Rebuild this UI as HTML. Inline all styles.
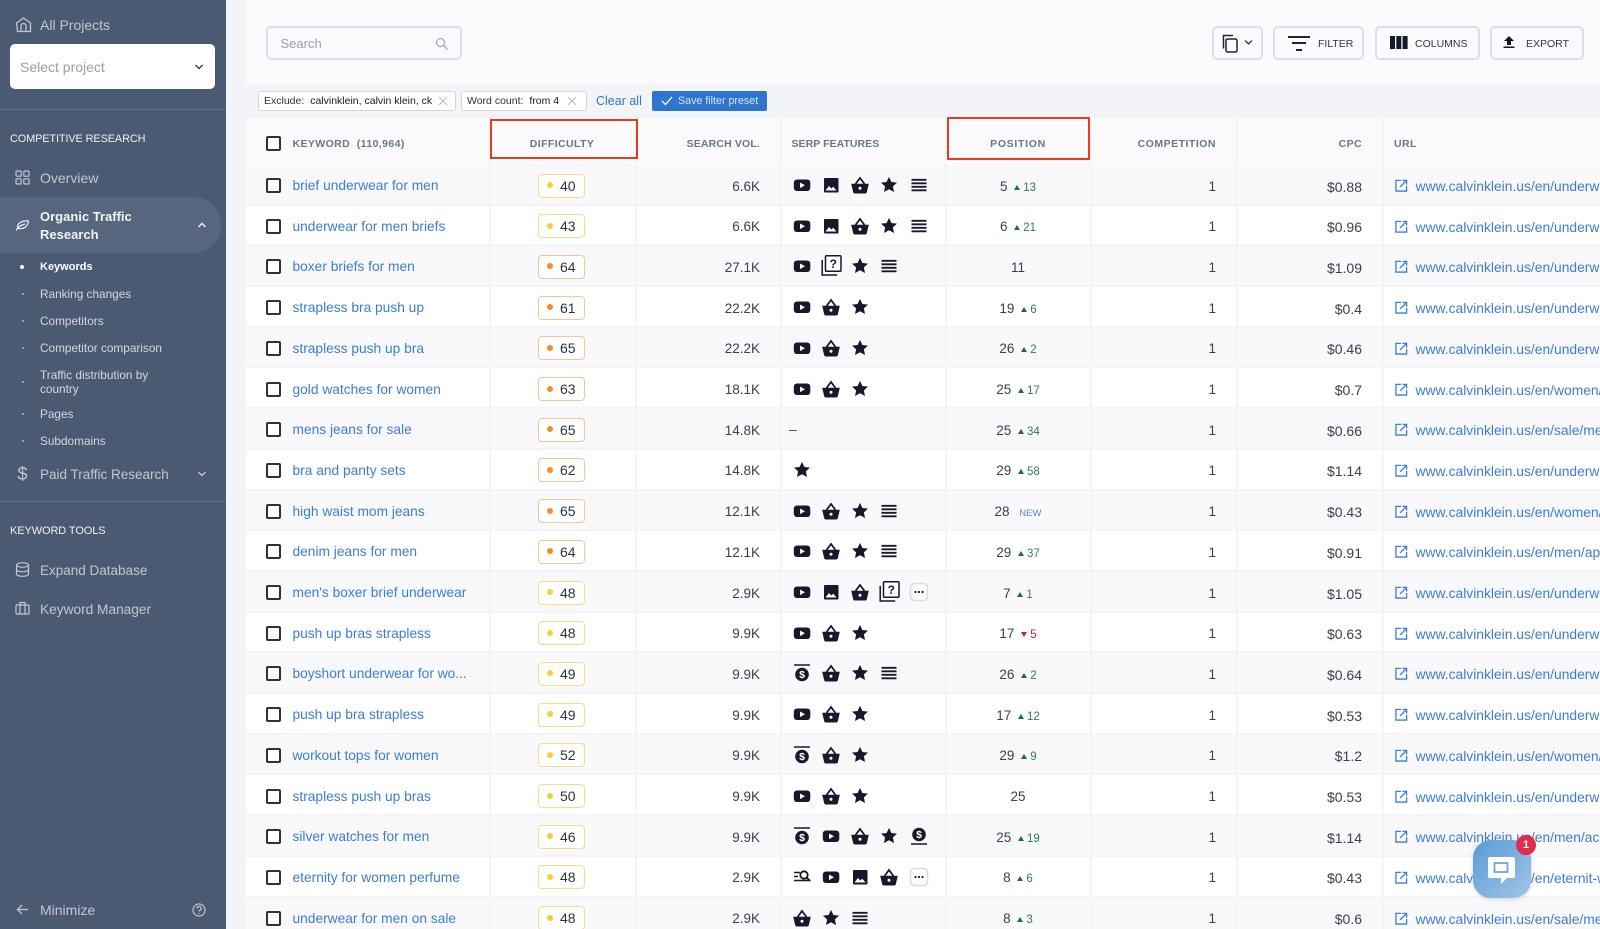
<!DOCTYPE html>
<html><head><meta charset="utf-8"><title>Keywords</title>
<style>
*{box-sizing:border-box}
html,body{margin:0;padding:0;width:1600px;height:929px;overflow:hidden;background:#f3f4f8;font-family:"Liberation Sans",sans-serif;color:#2b3240}
#side{position:absolute;left:0;top:0;width:226px;height:929px;background:#4a5a72;color:#c3c9d2}
#side div,#side svg{position:absolute}
.t{left:40px;font-size:13.5px;line-height:18px;white-space:nowrap;color:#c1c7d0}
.sub{left:40px;font-size:11.8px;line-height:14px;white-space:nowrap;color:#d3d8df}
.h{left:10px;font-size:10.9px;line-height:14px;color:#eef0f3;white-space:nowrap;letter-spacing:-.1px}
.ln{left:0;width:226px;height:1px;background:#5e6d84}
.bu{left:22px;width:2px;height:2px;border-radius:50%;background:#aab2bf}
#main{position:absolute;left:246px;top:0;width:1354px;height:929px;background:#fff;overflow:hidden}
#top{position:absolute;left:0;top:0;width:1354px;height:84px;background:#fbfbfe}
#fb{position:absolute;left:0;top:84px;width:1354px;height:34px;background:#f3f4f8}
.box{position:absolute;top:26px;height:34px;background:#fbfbfe;border:2px solid #dcdfe9;border-radius:5px;font-size:10.5px;color:#2f3644}
.box span{position:absolute;top:10px;line-height:13px;white-space:nowrap}
.box svg{position:absolute}
.chip{position:absolute;top:91px;height:20px;background:#fff;border:1px solid #d4d7e0;border-radius:3px;font-size:10.5px;line-height:19px;white-space:nowrap;padding-left:5px;color:#2b3240}
.chip b{font-weight:normal;color:#15181f;margin-left:3px}
.chip i{position:absolute;top:2px;font-style:normal;width:10px;height:10px}
#hd{position:absolute;left:0;top:118px;width:1354px;height:47px;background:#fafafd;font-size:10.5px;font-weight:bold;color:#6a7783;letter-spacing:.4px}
#hd span{position:absolute;top:20px;line-height:13px;white-space:nowrap}
.r{position:absolute;left:0;width:1354px;height:40.7px;border-bottom:2px solid #f3f4f8;font-size:13.5px;line-height:18px;color:#3a404c}
.r>*{position:absolute;top:12.5px;white-space:nowrap}
.c{left:20px;top:13px!important;width:15px;height:15px;border:2px solid #2d323c;border-radius:2px;background:#fff}
.k{left:46.5px;top:12px!important;color:#3b7dd8;font-size:13.75px}
.d{left:292px;top:8.5px!important;width:47px;height:24px;border:1.5px solid #f8dc85;border-radius:4px;background:#fff;line-height:22px;padding-left:21px;font-size:14px;color:#2b3240}
.d:before{content:"";position:absolute;left:7.5px;top:7.5px;width:6px;height:6px;border-radius:50%;background:#f8cc3c}
.d.o{border-color:#f9c596}
.d.o:before{background:#f58c2e}
.v{right:840px}
.s{left:541px;top:8px!important;height:24px;display:flex;font-size:14px}
.s svg{width:24px;height:24px;margin:0 2.65px;flex:none}
.p{left:700px;width:144px;text-align:center}
.u,.w,.n{font-size:11.5px;font-style:normal;margin-left:3px}
.u{color:#2e7d52}
.w{color:#d0202a}
.n{color:#5b86c9;font-size:9.5px;margin-left:6px}
.u:before,.w:before{content:"";display:inline-block;width:0;height:0;border-left:3.5px solid transparent;border-right:3.5px solid transparent;margin-right:3px;vertical-align:1px}
.u:before{border-bottom:5px solid #1f6b40}
.w:before{border-top:5px solid #d0202a}
.q{right:384px}
.m{right:238px;font-size:14px}
.x{left:1149px;top:14px!important;width:13px;height:13px}
.l{left:1169.5px;top:12px!important;color:#3b7dd8;font-size:13.85px}
.vl{position:absolute;top:118px;width:2px;height:811px;background:#f3f4f8}
.rb{position:absolute;border:2.5px solid #e83a1f}
#chat{position:absolute;left:1473px;top:840px;width:58px;height:58px;border-radius:18px;background:linear-gradient(135deg,#5a9ad4,#a0c6e8);box-shadow:0 1px 4px rgba(60,90,130,.25)}
#badge{position:absolute;left:1516px;top:835px;width:20px;height:20px;border-radius:50%;background:#e12c50;color:#fff;font-size:11px;font-weight:bold;text-align:center;line-height:20px}
</style></head><body>
<svg width="0" height="0" style="position:absolute"><defs>
<symbol id="yt" viewBox="0 0 24 24"><rect x="3.800" y="6.500" width="16.500" height="11.500" rx="3.200" fill="#15192a"/><path d="M10 9.500l5 2.800-5 2.800z" fill="#fff"/></symbol>
<symbol id="img" viewBox="0 0 24 24"><rect x="5" y="5" width="14.500" height="14.500" rx="1" fill="#15192a"/><path d="M6.500 17.500l3.500-4.500 2.300 2.500 2-1.800 3.200 3.800z" fill="#fff"/></symbol>
<symbol id="bas" viewBox="0 0 24 24"><path d="M3.200 10.800h17.600l-2 8.500a1.500 1.500 0 0 1-1.500 1.200H6.700a1.500 1.500 0 0 1-1.500-1.200z" fill="#15192a"/><path d="M7.500 11l4.500-6 4.500 6" fill="none" stroke="#15192a" stroke-width="1.800"/><circle cx="12" cy="15.300" r="1.500" fill="#fff"/></symbol>
<symbol id="star" viewBox="0 0 24 24"><path d="M12 3.900l2.400 5.100 5.600.6-4.100 3.800 1.100 5.600-5-2.800-5 2.800 1.100-5.600-4.100-3.800 5.600-.6z" fill="#15192a"/></symbol>
<symbol id="list" viewBox="0 0 24 24"><path d="M4.500 6.800h15M4.500 10.300h15M4.500 13.800h15M4.500 17.300h15" stroke="#15192a" stroke-width="1.800" fill="none"/></symbol>
<symbol id="faq" viewBox="0 0 24 24"><rect x="6.500" y="1.800" width="15.500" height="15.500" rx="1" fill="#fff" stroke="#15192a" stroke-width="1.500"/><path d="M3.200 6v15h15" fill="none" stroke="#15192a" stroke-width="1.500"/><text x="14.300" y="14" font-family="Liberation Sans" font-size="12" font-weight="bold" fill="#15192a" text-anchor="middle">?</text></symbol>
<symbol id="ct" viewBox="0 0 24 24"><path d="M4 4h16" stroke="#15192a" stroke-width="1.500"/><circle cx="12" cy="13.500" r="6.800" fill="#15192a"/><text x="12" y="17.200" font-family="Liberation Sans" font-size="10.500" font-weight="bold" fill="#fff" text-anchor="middle">$</text></symbol>
<symbol id="cb" viewBox="0 0 24 24"><path d="M4 20h16" stroke="#15192a" stroke-width="1.500"/><circle cx="12" cy="10.500" r="6.800" fill="#15192a"/><text x="12" y="14.200" font-family="Liberation Sans" font-size="10.500" font-weight="bold" fill="#fff" text-anchor="middle">$</text></symbol>
<symbol id="more" viewBox="0 0 24 24"><rect x="3.500" y="3.500" width="17" height="17" rx="4" fill="#fff" stroke="#d9dce8" stroke-width="1.500"/><circle cx="8.500" cy="12" r="1.100" fill="#15192a"/><circle cx="12" cy="12" r="1.100" fill="#15192a"/><circle cx="15.500" cy="12" r="1.100" fill="#15192a"/></symbol>
<symbol id="sl" viewBox="0 0 24 24"><path d="M4 7.500h6M4 11.500h4M4 15.500h16" stroke="#15192a" stroke-width="1.500" fill="none"/><circle cx="14" cy="10" r="3.700" fill="none" stroke="#15192a" stroke-width="1.800"/><path d="M16.700 12.700l3.500 3.300" stroke="#15192a" stroke-width="1.800"/></symbol>
<symbol id="ext" viewBox="0 0 14 14"><path d="M6.500 1.500H1v11.500h11.500V7.500" fill="none" stroke="#3b7dd8" stroke-width="1.400"/><path d="M5.500 8.500l6.500-6.500M8 1.500h4.500V6" fill="none" stroke="#3b7dd8" stroke-width="1.400"/></symbol>
</defs></svg>

<div id="side">
<svg style="left:15px;top:16px" width="17" height="17" viewBox="0 0 17 17" fill="none" stroke="#c1c7d0" stroke-width="1.300"><path d="M1.500 7l7-5 7 5v8.500h-13z"/><path d="M6 15.500V10a2.500 2.500 0 0 1 5 0v5.500"/></svg>
<div class="t" style="top:16px;font-size:14px">All Projects</div>
<div style="left:10px;top:44px;width:205px;height:45px;background:#fff;border-radius:5px"></div>
<div style="left:20px;top:58px;font-size:14px;line-height:18px;color:#99a0ab">Select project</div>
<svg style="left:194px;top:63px" width="10" height="8" viewBox="0 0 10 8" fill="none" stroke="#333c4c" stroke-width="1.400"><path d="M1.500 2l3.500 3.500L8.500 2"/></svg>
<div class="ln" style="top:109px"></div>
<div class="h" style="top:132px">COMPETITIVE RESEARCH</div>
<svg style="left:15px;top:170px" width="15" height="15" viewBox="0 0 15 15" fill="none" stroke="#c1c7d0" stroke-width="1.200"><rect x="1" y="1" width="5.200" height="5.200" rx="1"/><rect x="8.800" y="1" width="5.200" height="5.200" rx="1"/><rect x="1" y="8.800" width="5.200" height="5.200" rx="1"/><rect x="8.800" y="8.800" width="5.200" height="5.200" rx="1"/></svg>
<div class="t" style="top:169px;font-size:14px">Overview</div>
<div style="left:0;top:197px;width:221px;height:56px;background:#56667e;border-radius:0 28px 28px 0"></div>
<svg style="left:15px;top:218px" width="15" height="14" viewBox="0 0 15 14" fill="none" stroke="#eef0f3" stroke-width="1.200"><path d="M2.500 9C3 4 8 2.500 13.500 3 13 8 9 11.500 3.500 10.500zM1 12.500C3 9 6 7 10 6"/></svg>
<div class="t" style="top:208px;color:#f1f3f5;font-weight:bold;font-size:13px;line-height:17.500px">Organic Traffic<br>Research</div>
<svg style="left:197px;top:221px" width="10" height="8" viewBox="0 0 10 8" fill="none" stroke="#eef0f3" stroke-width="1.400"><path d="M1.500 6L5 2.500 8.500 6"/></svg>
<div style="left:20px;top:265px;width:4px;height:4px;border-radius:50%;background:#fff"></div>
<div class="sub" style="top:260px;color:#fff;font-weight:bold;font-size:11px">Keywords</div>
<div class="bu" style="top:293px"></div><div class="sub" style="top:287px">Ranking changes</div>
<div class="bu" style="top:320px"></div><div class="sub" style="top:314px">Competitors</div>
<div class="bu" style="top:347px"></div><div class="sub" style="top:341px">Competitor comparison</div>
<div class="bu" style="top:381px"></div><div class="sub" style="top:367.500px">Traffic distribution by<br>country</div>
<div class="bu" style="top:413px"></div><div class="sub" style="top:407px">Pages</div>
<div class="bu" style="top:440px"></div><div class="sub" style="top:434px">Subdomains</div>
<div style="left:17.500px;top:464px;font-size:18px;line-height:20px;color:#c1c7d0">$</div>
<div class="t" style="top:466px">Paid Traffic Research</div>
<svg style="left:197px;top:470px" width="10" height="8" viewBox="0 0 10 8" fill="none" stroke="#c1c7d0" stroke-width="1.400"><path d="M1.500 2L5 5.500 8.500 2"/></svg>
<div class="ln" style="top:501px"></div>
<div class="h" style="top:524px;font-size:11px">KEYWORD TOOLS</div>
<svg style="left:15px;top:562px" width="15" height="15" viewBox="0 0 15 15" fill="none" stroke="#c1c7d0" stroke-width="1.200"><ellipse cx="7.500" cy="3" rx="6" ry="2.300"/><path d="M1.500 3v9c0 1.300 2.700 2.300 6 2.300s6-1 6-2.300V3M1.500 7.500c0 1.300 2.700 2.300 6 2.300s6-1 6-2.300"/></svg>
<div class="t" style="top:562px">Expand Database</div>
<svg style="left:15px;top:601px" width="15" height="14" viewBox="0 0 15 14" fill="none" stroke="#c1c7d0" stroke-width="1.200"><rect x="1" y="4" width="13" height="9" rx="1"/><path d="M5 13V1.500h5V13"/></svg>
<div class="t" style="top:601px;font-size:13.700px">Keyword Manager</div>
<svg style="left:16px;top:903px" width="13" height="13" viewBox="0 0 13 13" fill="none" stroke="#c1c7d0" stroke-width="1.300"><path d="M12 6.500H1.500M6 2L1.500 6.500 6 11"/></svg>
<div class="t" style="top:901px;font-size:14px">Minimize</div>
<svg style="left:192px;top:903px" width="14" height="14" viewBox="0 0 14 14" fill="none" stroke="#c1c7d0" stroke-width="1.200"><circle cx="7" cy="7" r="6"/><path d="M5 5.500a2 2 0 1 1 2.800 1.800c-.6.300-.8.700-.8 1.300"/><path d="M7 10v1"/></svg>
</div>

<div id="main">
<div id="top"></div><div id="fb"></div>
<div class="box" style="left:19.500px;width:196px;border-radius:5px"><span style="left:13px;font-size:13px;top:9px;color:#9aa0ab">Search</span><svg style="left:167px;top:9px" width="14" height="14" viewBox="0 0 14 14" fill="none" stroke="#a4a9b3" stroke-width="1.300"><circle cx="5.500" cy="5.500" r="4"/><path d="M8.500 8.500l4 4"/></svg></div>
<div class="box" style="left:966px;width:51px"><svg style="left:7px;top:6px" width="18" height="20" viewBox="0 0 18 20" fill="none" stroke="#20242e" stroke-width="1.500"><rect x="5" y="5" width="11" height="13" rx="1.500"/><path d="M12 1.500H2.500v13"/></svg><svg style="left:30px;top:11px" width="9" height="7" viewBox="0 0 9 7" fill="none" stroke="#333" stroke-width="1.300"><path d="M1 1.500l3.500 3.500L8 1.500"/></svg></div>
<div class="box" style="left:1027px;width:91px"><svg style="left:12px;top:7px" width="24" height="18" viewBox="0 0 24 18" fill="none" stroke="#20242e" stroke-width="2"><path d="M1 2h22M5 8h14M9 15h6"/></svg><span style="left:43px">FILTER</span></div>
<div class="box" style="left:1129px;width:105px"><svg style="left:13px;top:8px" width="18" height="14" viewBox="0 0 18 14" fill="#15192a"><rect width="5" height="13"/><rect x="6.300" width="5" height="13"/><rect x="12.600" width="5" height="13"/></svg><span style="left:38px">COLUMNS</span></div>
<div class="box" style="left:1244px;width:94px"><svg style="left:10px;top:7px" width="14" height="15" viewBox="0 0 14 15" fill="#15192a"><path d="M7 1l5 5H9v4H5V6H2z"/><rect x="1.500" y="11.500" width="11" height="1.500"/></svg><span style="left:34px">EXPORT</span></div>

<div class="chip" style="left:12px;width:198px">Exclude: <b>calvinklein, calvin klein, ck</b><i style="left:179px"><svg width="10" height="10" viewBox="0 0 10 10" stroke="#b4b8c2" stroke-width="1"><path d="M1 1l8 8M9 1L1 9"/></svg></i></div>
<div class="chip" style="left:215px;width:126px">Word count: <b>from 4</b><i style="left:105px"><svg width="10" height="10" viewBox="0 0 10 10" stroke="#b4b8c2" stroke-width="1"><path d="M1 1l8 8M9 1L1 9"/></svg></i></div>
<div style="position:absolute;left:350px;top:93px;font-size:12.500px;line-height:16px;color:#3276cf;white-space:nowrap">Clear all</div>
<div style="position:absolute;left:406px;top:91px;width:115px;height:20px;background:#2f74cd;border-radius:2px;color:#d4e3f6;font-size:10.700px;line-height:21px;padding-left:26px;white-space:nowrap">Save filter preset<svg style="position:absolute;left:9px;top:5px" width="12" height="10" viewBox="0 0 12 10" fill="none" stroke="#fff" stroke-width="1.300"><path d="M1 5l3.500 3.500L11 1"/></svg></div>

<div id="hd">
<span style="left:46.500px;font-size:10.500px">KEYWORD&nbsp; (110,964)</span>
<span style="left:243px;width:146px;text-align:center">DIFFICULTY</span>
<span style="right:840px;letter-spacing:.15px">SEARCH VOL.</span>
<span style="left:545.500px;letter-spacing:.05px">SERP FEATURES</span>
<span style="left:700px;width:144px;text-align:center;letter-spacing:.7px">POSITION</span>
<span style="right:384px;letter-spacing:.5px">COMPETITION</span>
<span style="right:238px">CPC</span>
<span style="left:1148px">URL</span>
<i style="position:absolute;left:20px;top:18px;width:15px;height:15px;border:2px solid #2d323c;border-radius:2px;background:#fff"></i>
</div>

<div class="r" style="top:165px;background:#f9f9fc"><i class="c"></i><span class="k">brief underwear for men</span><span class="d">40</span><span class="v">6.6K</span><span class="s"><svg><use href="#yt"/></svg><svg><use href="#img"/></svg><svg><use href="#bas"/></svg><svg><use href="#star"/></svg><svg><use href="#list"/></svg></span><span class="p">5 <em class="u">13</em></span><span class="q">1</span><span class="m">$0.88</span><svg class="x"><use href="#ext"/></svg><span class="l">www.calvinklein.us/en/underwear/mens-underwear</span></div>
<div class="r" style="top:205.700px;background:#fff"><i class="c"></i><span class="k">underwear for men briefs</span><span class="d">43</span><span class="v">6.6K</span><span class="s"><svg><use href="#yt"/></svg><svg><use href="#img"/></svg><svg><use href="#bas"/></svg><svg><use href="#star"/></svg><svg><use href="#list"/></svg></span><span class="p">6 <em class="u">21</em></span><span class="q">1</span><span class="m">$0.96</span><svg class="x"><use href="#ext"/></svg><span class="l">www.calvinklein.us/en/underwear/mens-underwear</span></div>
<div class="r" style="top:246.400px;background:#f9f9fc"><i class="c"></i><span class="k">boxer briefs for men</span><span class="d o">64</span><span class="v">27.1K</span><span class="s"><svg><use href="#yt"/></svg><svg><use href="#faq"/></svg><svg><use href="#star"/></svg><svg><use href="#list"/></svg></span><span class="p">11</span><span class="q">1</span><span class="m">$1.09</span><svg class="x"><use href="#ext"/></svg><span class="l">www.calvinklein.us/en/underwear/mens-underwear</span></div>
<div class="r" style="top:287.100px;background:#fff"><i class="c"></i><span class="k">strapless bra push up</span><span class="d o">61</span><span class="v">22.2K</span><span class="s"><svg><use href="#yt"/></svg><svg><use href="#bas"/></svg><svg><use href="#star"/></svg></span><span class="p">19 <em class="u">6</em></span><span class="q">1</span><span class="m">$0.4</span><svg class="x"><use href="#ext"/></svg><span class="l">www.calvinklein.us/en/underwear/womens-underwear</span></div>
<div class="r" style="top:327.800px;background:#f9f9fc"><i class="c"></i><span class="k">strapless push up bra</span><span class="d o">65</span><span class="v">22.2K</span><span class="s"><svg><use href="#yt"/></svg><svg><use href="#bas"/></svg><svg><use href="#star"/></svg></span><span class="p">26 <em class="u">2</em></span><span class="q">1</span><span class="m">$0.46</span><svg class="x"><use href="#ext"/></svg><span class="l">www.calvinklein.us/en/underwear/womens-underwear</span></div>
<div class="r" style="top:368.500px;background:#fff"><i class="c"></i><span class="k">gold watches for women</span><span class="d o">63</span><span class="v">18.1K</span><span class="s"><svg><use href="#yt"/></svg><svg><use href="#bas"/></svg><svg><use href="#star"/></svg></span><span class="p">25 <em class="u">17</em></span><span class="q">1</span><span class="m">$0.7</span><svg class="x"><use href="#ext"/></svg><span class="l">www.calvinklein.us/en/women/accessories/watches</span></div>
<div class="r" style="top:409.200px;background:#f9f9fc"><i class="c"></i><span class="k">mens jeans for sale</span><span class="d o">65</span><span class="v">14.8K</span><span class="s"><span style="margin:0 0 0 2px;line-height:24px">–</span></span><span class="p">25 <em class="u">34</em></span><span class="q">1</span><span class="m">$0.66</span><svg class="x"><use href="#ext"/></svg><span class="l">www.calvinklein.us/en/sale/mens-jeans-clothing</span></div>
<div class="r" style="top:449.900px;background:#fff"><i class="c"></i><span class="k">bra and panty sets</span><span class="d o">62</span><span class="v">14.8K</span><span class="s"><svg><use href="#star"/></svg></span><span class="p">29 <em class="u">58</em></span><span class="q">1</span><span class="m">$1.14</span><svg class="x"><use href="#ext"/></svg><span class="l">www.calvinklein.us/en/underwear/womens-underwear</span></div>
<div class="r" style="top:490.600px;background:#f9f9fc"><i class="c"></i><span class="k">high waist mom jeans</span><span class="d o">65</span><span class="v">12.1K</span><span class="s"><svg><use href="#yt"/></svg><svg><use href="#bas"/></svg><svg><use href="#star"/></svg><svg><use href="#list"/></svg></span><span class="p">28 <em class="n">NEW</em></span><span class="q">1</span><span class="m">$0.43</span><svg class="x"><use href="#ext"/></svg><span class="l">www.calvinklein.us/en/women/apparel/jeans-clothing</span></div>
<div class="r" style="top:531.300px;background:#fff"><i class="c"></i><span class="k">denim jeans for men</span><span class="d o">64</span><span class="v">12.1K</span><span class="s"><svg><use href="#yt"/></svg><svg><use href="#bas"/></svg><svg><use href="#star"/></svg><svg><use href="#list"/></svg></span><span class="p">29 <em class="u">37</em></span><span class="q">1</span><span class="m">$0.91</span><svg class="x"><use href="#ext"/></svg><span class="l">www.calvinklein.us/en/men/apparel/jeans-clothing</span></div>
<div class="r" style="top:572px;background:#f9f9fc"><i class="c"></i><span class="k">men's boxer brief underwear</span><span class="d">48</span><span class="v">2.9K</span><span class="s"><svg><use href="#yt"/></svg><svg><use href="#img"/></svg><svg><use href="#bas"/></svg><svg><use href="#faq"/></svg><svg><use href="#more"/></svg></span><span class="p">7 <em class="u">1</em></span><span class="q">1</span><span class="m">$1.05</span><svg class="x"><use href="#ext"/></svg><span class="l">www.calvinklein.us/en/underwear/mens-underwear</span></div>
<div class="r" style="top:612.700px;background:#fff"><i class="c"></i><span class="k">push up bras strapless</span><span class="d">48</span><span class="v">9.9K</span><span class="s"><svg><use href="#yt"/></svg><svg><use href="#bas"/></svg><svg><use href="#star"/></svg></span><span class="p">17 <em class="w">5</em></span><span class="q">1</span><span class="m">$0.63</span><svg class="x"><use href="#ext"/></svg><span class="l">www.calvinklein.us/en/underwear/womens-underwear</span></div>
<div class="r" style="top:653.400px;background:#f9f9fc"><i class="c"></i><span class="k">boyshort underwear for wo...</span><span class="d">49</span><span class="v">9.9K</span><span class="s"><svg><use href="#ct"/></svg><svg><use href="#bas"/></svg><svg><use href="#star"/></svg><svg><use href="#list"/></svg></span><span class="p">26 <em class="u">2</em></span><span class="q">1</span><span class="m">$0.64</span><svg class="x"><use href="#ext"/></svg><span class="l">www.calvinklein.us/en/underwear/womens-underwear</span></div>
<div class="r" style="top:694.100px;background:#fff"><i class="c"></i><span class="k">push up bra strapless</span><span class="d">49</span><span class="v">9.9K</span><span class="s"><svg><use href="#yt"/></svg><svg><use href="#bas"/></svg><svg><use href="#star"/></svg></span><span class="p">17 <em class="u">12</em></span><span class="q">1</span><span class="m">$0.53</span><svg class="x"><use href="#ext"/></svg><span class="l">www.calvinklein.us/en/underwear/womens-underwear</span></div>
<div class="r" style="top:734.800px;background:#f9f9fc"><i class="c"></i><span class="k">workout tops for women</span><span class="d">52</span><span class="v">9.9K</span><span class="s"><svg><use href="#ct"/></svg><svg><use href="#bas"/></svg><svg><use href="#star"/></svg></span><span class="p">29 <em class="u">9</em></span><span class="q">1</span><span class="m">$1.2</span><svg class="x"><use href="#ext"/></svg><span class="l">www.calvinklein.us/en/women/apparel/tops-clothing</span></div>
<div class="r" style="top:775.500px;background:#fff"><i class="c"></i><span class="k">strapless push up bras</span><span class="d">50</span><span class="v">9.9K</span><span class="s"><svg><use href="#yt"/></svg><svg><use href="#bas"/></svg><svg><use href="#star"/></svg></span><span class="p">25</span><span class="q">1</span><span class="m">$0.53</span><svg class="x"><use href="#ext"/></svg><span class="l">www.calvinklein.us/en/underwear/womens-underwear</span></div>
<div class="r" style="top:816.200px;background:#f9f9fc"><i class="c"></i><span class="k">silver watches for men</span><span class="d">46</span><span class="v">9.9K</span><span class="s"><svg><use href="#ct"/></svg><svg><use href="#yt"/></svg><svg><use href="#bas"/></svg><svg><use href="#star"/></svg><svg><use href="#cb"/></svg></span><span class="p">25 <em class="u">19</em></span><span class="q">1</span><span class="m">$1.14</span><svg class="x"><use href="#ext"/></svg><span class="l">www.calvinklein.us/en/men/accessories/watches</span></div>
<div class="r" style="top:856.900px;background:#fff"><i class="c"></i><span class="k">eternity for women perfume</span><span class="d">48</span><span class="v">2.9K</span><span class="s"><svg><use href="#sl"/></svg><svg><use href="#yt"/></svg><svg><use href="#img"/></svg><svg><use href="#bas"/></svg><svg><use href="#more"/></svg></span><span class="p">8 <em class="u">6</em></span><span class="q">1</span><span class="m">$0.43</span><svg class="x"><use href="#ext"/></svg><span class="l">www.calvinklein.us/en/eternit-women-fragrance</span></div>
<div class="r" style="top:897.600px;background:#f9f9fc"><i class="c"></i><span class="k">underwear for men on sale</span><span class="d">48</span><span class="v">2.9K</span><span class="s"><svg><use href="#bas"/></svg><svg><use href="#star"/></svg><svg><use href="#list"/></svg></span><span class="p">8 <em class="u">3</em></span><span class="q">1</span><span class="m">$0.6</span><svg class="x"><use href="#ext"/></svg><span class="l">www.calvinklein.us/en/sale/mens-underwear</span></div>

<i class="vl" style="left:242.500px"></i><i class="vl" style="left:388.500px"></i><i class="vl" style="left:534px"></i><i class="vl" style="left:699px"></i><i class="vl" style="left:844px"></i><i class="vl" style="left:990px"></i><i class="vl" style="left:1135.500px"></i>
<div class="rb" style="left:244px;top:119px;width:148px;height:40px"></div>
<div class="rb" style="left:701px;top:117px;width:143px;height:43px"></div>
</div>

<div id="chat"><svg style="position:absolute;left:14px;top:16px" width="30" height="30" viewBox="0 0 30 30"><path d="M3 1h23a2 2 0 0 1 2 2v17a2 2 0 0 1-2 2H20l-6 6v-6H3a2 2 0 0 1-2-2V3a2 2 0 0 1 2-2z" fill="#fff"/><rect x="7.500" y="7" width="13" height="9" fill="none" stroke="#6fa6da" stroke-width="1.800"/></svg></div>
<div id="badge">1</div>
</body></html>
